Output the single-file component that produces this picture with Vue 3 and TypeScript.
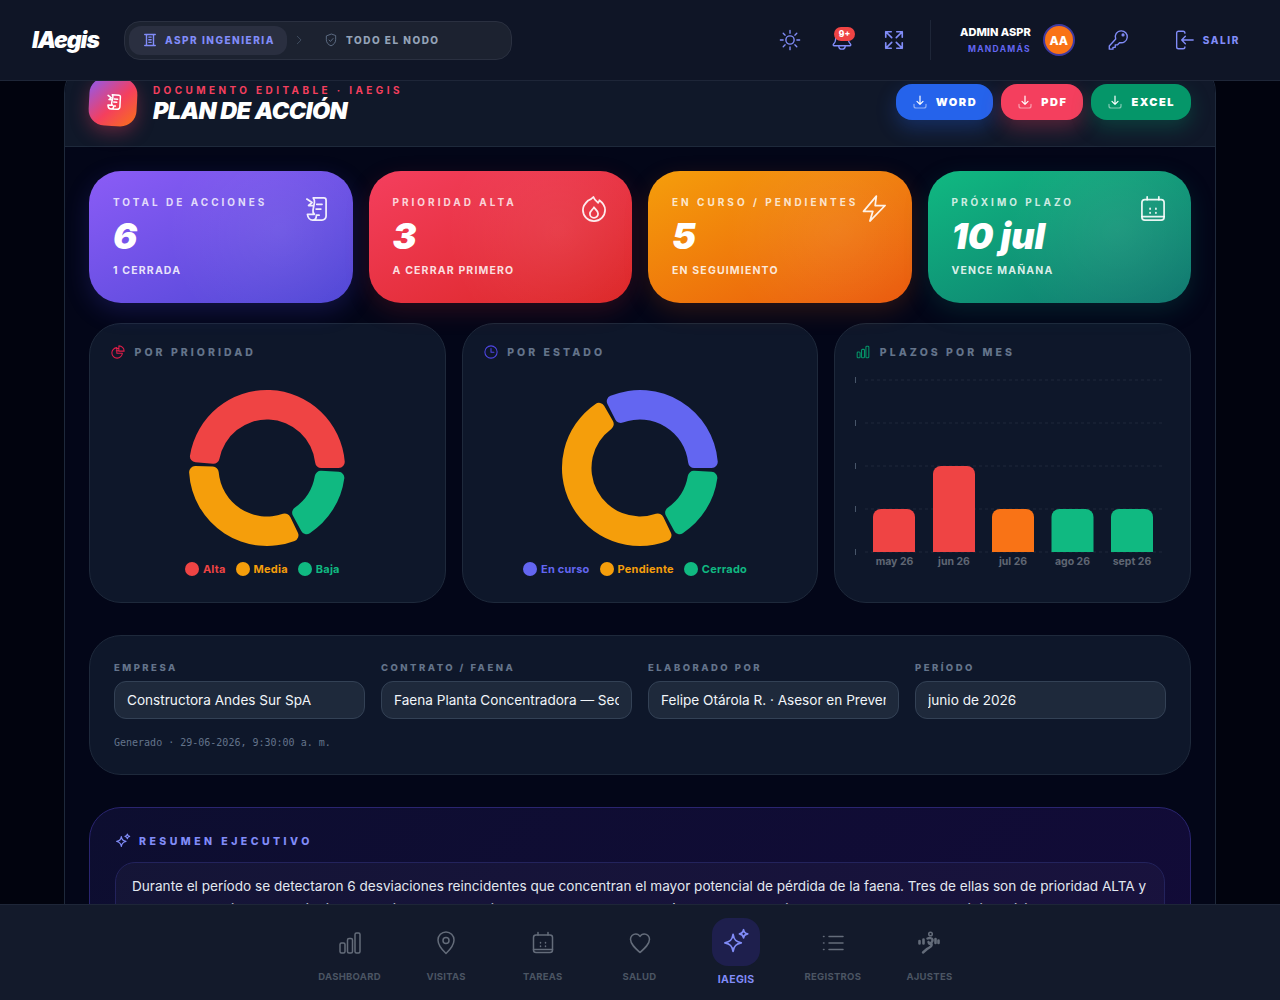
<script setup lang="ts">
type Seg = { value: number; color: string }

function pt(r: number, deg: number): string {
  const a = (deg * Math.PI) / 180
  return `${(100 + r * Math.cos(a)).toFixed(2)} ${(100 - r * Math.sin(a)).toFixed(2)}`
}

function sector(a1: number, a2: number, R = 78, r = 48.5, c = 6): string {
  const dO = (Math.asin(c / (R - c)) * 180) / Math.PI
  const dI = (Math.asin(c / (r + c)) * 180) / Math.PI
  const eO = Math.sqrt((R - c) ** 2 - c ** 2)
  const eI = Math.sqrt((r + c) ** 2 - c ** 2)
  const large = a2 - a1 - 2 * dO > 180 ? 1 : 0
  return [
    `M ${pt(eO, a1)}`,
    `A ${c} ${c} 0 0 0 ${pt(R, a1 + dO)}`,
    `A ${R} ${R} 0 ${large} 0 ${pt(R, a2 - dO)}`,
    `A ${c} ${c} 0 0 0 ${pt(eO, a2)}`,
    `L ${pt(eI, a2)}`,
    `A ${c} ${c} 0 0 0 ${pt(r, a2 - dI)}`,
    `A ${r} ${r} 0 ${large} 1 ${pt(r, a1 + dI)}`,
    `A ${c} ${c} 0 0 0 ${pt(eI, a1)}`,
    'Z',
  ].join(' ')
}

function donut(segs: Seg[]) {
  const total = segs.reduce((s, x) => s + x.value, 0)
  const per = (360 - 3 * segs.length) / total
  let a = 0
  return segs.map((s) => {
    const end = a + s.value * per
    const out = { d: sector(a, end), color: s.color }
    a = end + 3
    return out
  })
}

const prioridad = donut([
  { value: 3, color: '#ef4444' },
  { value: 2, color: '#f59e0b' },
  { value: 1, color: '#10b981' },
])
const estado = donut([
  { value: 2, color: '#6366f1' },
  { value: 3, color: '#f59e0b' },
  { value: 1, color: '#10b981' },
])

const legendA = [
  { t: 'Alta', c: '#ef4444' },
  { t: 'Media', c: '#f59e0b' },
  { t: 'Baja', c: '#10b981' },
]
const legendB = [
  { t: 'En curso', c: '#6366f1' },
  { t: 'Pendiente', c: '#f59e0b' },
  { t: 'Cerrado', c: '#10b981' },
]

const gridY = [6, 49, 92, 135, 178]
const bars = [
  { x: 18, y: 135, h: 43, c: '#ef4444', l: 'may 26', lx: 39.5 },
  { x: 78, y: 92, h: 86, c: '#ef4444', l: 'jun 26', lx: 99 },
  { x: 137, y: 135, h: 43, c: '#f97316', l: 'jul 26', lx: 158 },
  { x: 196.5, y: 135, h: 43, c: '#10b981', l: 'ago 26', lx: 217.5 },
  { x: 256, y: 135, h: 43, c: '#10b981', l: 'sept 26', lx: 277 },
]

function barPath(x: number, y: number, h: number): string {
  const w = 42
  const r = 8
  return `M${x} ${y + h}V${y + r}a${r} ${r} 0 0 1 ${r} ${-r}H${x + w - r}a${r} ${r} 0 0 1 ${r} ${r}V${y + h}Z`
}

const fields = [
  { l: 'Empresa', v: 'Constructora Andes Sur SpA' },
  { l: 'Contrato / Faena', v: 'Faena Planta Concentradora — Sector Norte' },
  { l: 'Elaborado por', v: 'Felipe Otárola R. · Asesor en Prevención' },
  { l: 'Período', v: 'junio de 2026' },
]

const kpis = [
  { k: 'violet', l: 'Total de acciones', v: '6', s: '1 cerrada', i: 'scroll' },
  { k: 'red', l: 'Prioridad alta', v: '3', s: 'A cerrar primero', i: 'flame' },
  { k: 'amber', l: 'En curso / pendientes', v: '5', s: 'En seguimiento', i: 'bolt' },
  { k: 'green', l: 'Próximo plazo', v: '10 jul', s: 'Vence mañana', i: 'cal' },
]

const nav = [
  { l: 'Dashboard', i: 'bars' },
  { l: 'Visitas', i: 'pin' },
  { l: 'Tareas', i: 'cal' },
  { l: 'Salud', i: 'heart' },
  { l: 'IAegis', i: 'spark', active: true },
  { l: 'Registros', i: 'list' },
  { l: 'Ajustes', i: 'run' },
]

const downloads = [
  { l: 'Word', k: 'blue' },
  { l: 'PDF', k: 'rose' },
  { l: 'Excel', k: 'emerald' },
]
</script>

<template>
  <div class="page">
    <svg class="defs" width="0" height="0" aria-hidden="true">
      <defs>
        <symbol id="i-scroll" viewBox="0 0 24 24">
          <path d="M5 3.500 9.500 6.500 6.500 9H10M10.500 2.500h9a2 2 0 0 1 2 2V18a3.500 3.500 0 0 1-3.500 3.500h-8M10.500 2.500c1 1.300 1.300 2.600 1 4l-1.200 6.500c-.3 1.500.3 2.800 1.200 3.500H5.500c.3 2.800 2.200 5 4.500 5 1.900 0 3.200-1.800 3.200-4.200h2.300" />
          <path d="M13.500 8h4.500M13 12h4" />
        </symbol>
        <symbol id="i-flame" viewBox="0 0 24 24">
          <path d="M11.500 1.700c.8 2.500 2.500 3.800 4 5 .6-.7 1-1.300 1.100-2.200 2.700 2 4.900 5 4.900 8.300a9.500 9.500 0 0 1-19 0c0-3.800 2.500-6.300 4.500-8.100 1.900-.7 3.500-1.800 4.500-3z" />
          <path d="M12 10.500c.4 1.500 3.500 2.700 3.500 5.500a3.500 3.500 0 0 1-7 0c0-2.500 2.600-3.300 3.500-5.500z" />
        </symbol>
        <symbol id="i-bolt" viewBox="0 0 24 24">
          <path d="M14 1 3 14h8l-2.500 8.300L21.500 9H13z" />
        </symbol>
        <symbol id="i-cal" viewBox="0 0 24 24">
          <rect x="2.500" y="4" width="19" height="17.500" rx="2.500" />
          <path d="M7 1.500V4M17 1.500V4M2.500 18.500h19M9.500 11.500v.5M14.500 11.500v.5M9.500 15v.5M14.500 15v.5" />
        </symbol>
        <symbol id="i-bars" viewBox="0 0 24 24">
          <rect x="2" y="12" width="5" height="10" rx="1.500" />
          <rect x="9.500" y="7.500" width="5" height="14.500" rx="1.500" />
          <rect x="17" y="2" width="5" height="20" rx="1.500" />
        </symbol>
        <symbol id="i-pin" viewBox="0 0 24 24">
          <path d="M12 22.500s-8-7.500-8-13.500a8 8 0 0 1 16 0c0 6-8 13.500-8 13.500z" />
          <circle cx="12" cy="9.500" r="3" />
        </symbol>
        <symbol id="i-heart" viewBox="0 0 24 24">
          <path d="M12 21.500C7 17 2.500 13 2.500 8.300A5.300 5.300 0 0 1 7.800 3c1.800 0 3.300.8 4.200 2.500C12.900 3.800 14.400 3 16.200 3a5.300 5.300 0 0 1 5.300 5.300C21.500 13 17 17 12 21.500z" />
        </symbol>
        <symbol id="i-spark" viewBox="0 0 24 24">
          <path d="M9.500 5.500c.7 4.700 2.500 6.500 7 7.200-4.500.8-6.300 2.600-7 7.300-.7-4.700-2.500-6.500-7-7.300 4.500-.7 6.300-2.500 7-7.200z" />
          <path d="M18.500 1.500c.3 2.300 1.200 3.200 3.500 3.500-2.300.4-3.200 1.200-3.500 3.500-.4-2.300-1.200-3.100-3.500-3.500 2.300-.3 3.100-1.200 3.500-3.500z" />
        </symbol>
        <symbol id="i-list" viewBox="0 0 24 24">
          <path d="M8 5.500h14M8 12h14M8 18.500h14M2.500 5.500h.5M2.500 12h.5M2.500 18.500h.5" />
        </symbol>
        <symbol id="i-run" viewBox="0 0 24 24">
          <circle cx="13.500" cy="3" r="1.800" />
          <path stroke-width="2.400" d="M10.500 7.500c2-.8 4.500-.6 5 1 .4 1.500-1 3.300-2.700 4 1.200.5 2 1.200 1.700 2.200-.4 1.400-3 2-4.500 3.300L6 21.500" />
          <path stroke-width="2.400" d="M14.500 13c-1.400.3-2.700-.6-3-2" />
          <path stroke-width="2.600" d="M2.500 10v2.500M6.500 8.500v4M18.500 8v4M21.500 9.500v2.500" />
        </symbol>
        <symbol id="i-download" viewBox="0 0 24 24">
          <path d="M12 3v12.500M7.500 11l4.500 4.500 4.500-4.500" />
          <path class="soft" d="M3 15.500V18a3 3 0 0 0 3 3h12a3 3 0 0 0 3-3v-2.500" />
        </symbol>
      </defs>
    </svg>

    <header class="topbar">
      <div class="logo">IAegis</div>
      <div class="crumbs">
        <div class="crumb active">
          <svg class="ico14" viewBox="0 0 24 24"><path stroke-width="2.400" d="M3 2.500h18M3 21.500h18M6 2.500v19M18 2.500v19M10 7h4M10 11.500h4M10 16h4" /></svg>
          <span>ASPR Ingenieria</span>
        </div>
        <svg class="chev" viewBox="0 0 24 24"><path d="m8 3 9 9-9 9" /></svg>
        <div class="crumb">
          <svg class="ico14" viewBox="0 0 24 24"><path d="M12 2 4 5v6.500c0 5 3.400 8.700 8 10.500 4.600-1.800 8-5.500 8-10.500V5z" /><path d="m8.500 12 2.500 2.500 4.500-5" /></svg>
          <span>Todo el nodo</span>
        </div>
      </div>
      <div class="tools">
        <button class="tool">
          <svg class="ico22" viewBox="0 0 24 24"><circle cx="12" cy="12" r="4.500" /><path d="M12 1.500v3M12 19.500v3M1.500 12h3M19.500 12h3M4.600 4.600l2.100 2.100M17.300 17.300l2.100 2.100M4.600 19.400l2.100-2.100M17.300 6.700l2.100-2.100" /></svg>
        </button>
        <button class="tool bell">
          <svg class="ico22" viewBox="0 0 24 24"><path d="M5 11.500a7 7 0 0 1 14 0c0 2.500.8 3.700 2.300 5 .6.600.3 1.800-.8 1.800h-17c-1.100 0-1.400-1.200-.8-1.800 1.500-1.300 2.300-2.500 2.300-5z" /><path d="M8.500 18.500a3.500 3.500 0 0 0 7 0" /></svg>
          <span class="badge">9+</span>
        </button>
        <button class="tool">
          <svg class="ico22 thick" viewBox="0 0 24 24"><path d="M3 9V3h6M3 3l6.500 6.500M21 9V3h-6M21 3l-6.500 6.500M3 15v6h6M3 21l6.500-6.500M21 15v6h-6M21 21l-6.500-6.500" /></svg>
        </button>
      </div>
      <div class="divider"></div>
      <div class="user">
        <div class="name">Admin ASPR</div>
        <div class="role">Mandamás</div>
      </div>
      <div class="avatar">AA</div>
      <svg class="ico22 key" viewBox="0 0 24 24"><path d="M15.500 2a6.500 6.500 0 1 1-1.500 12.800L11.500 17.300H9V20H6.500v2h-4v-3.500l7-7.500a6.500 6.500 0 0 1 6-9z" /><circle cx="17.500" cy="6.500" r="1" /></svg>
      <button class="logout">
        <svg class="ico22" viewBox="0 0 24 24"><path d="M11 2.500H6a2 2 0 0 0-2 2v15a2 2 0 0 0 2 2h5a2 2 0 0 0 2-2M13 4.500a2 2 0 0 0-2-2M22 12H9.500M13.500 8l-4 4 4 4" /></svg>
        <span>Salir</span>
      </button>
    </header>

    <main class="main">
      <section class="panel">
        <div class="panel-head">
          <div class="tile">
            <svg class="tile-ico"><use href="#i-scroll" /></svg>
          </div>
          <div class="heading">
            <div class="eyebrow">Documento editable · IAegis</div>
            <h1>Plan de acción</h1>
          </div>
          <div class="actions">
            <button v-for="d in downloads" :key="d.l" class="dl" :class="d.k">
              <svg class="ico16"><use href="#i-download" /></svg>
              <span>{{ d.l }}</span>
            </button>
          </div>
        </div>

        <div class="panel-body">
          <div class="kpis">
            <article v-for="k in kpis" :key="k.l" class="kpi" :class="k.k">
              <div class="kpi-text">
                <div class="kpi-label">{{ k.l }}</div>
                <div class="kpi-value">{{ k.v }}</div>
                <div class="kpi-sub">{{ k.s }}</div>
              </div>
              <svg class="kpi-ico"><use :href="'#i-' + k.i" /></svg>
            </article>
          </div>

          <div class="charts">
            <article class="card chart">
              <div class="card-title">
                <svg class="ico14 t-rose" viewBox="0 0 24 24"><path d="M10 4.500a9 9 0 1 0 9.500 9.500H10z" /><path d="M13.500 1.500a9 9 0 0 1 9 9h-9zM13.500 6H9M13.500 10H9" /></svg>
                <span>Por prioridad</span>
              </div>
              <svg class="donut" viewBox="0 0 200 200">
                <path v-for="(s, i) in prioridad" :key="i" :d="s.d" :fill="s.color" />
              </svg>
              <ul class="legend">
                <li v-for="l in legendA" :key="l.t" :style="{ color: l.c }">
                  <i :style="{ background: l.c }"></i>{{ l.t }}
                </li>
              </ul>
            </article>

            <article class="card chart">
              <div class="card-title">
                <svg class="ico14 t-indigo" viewBox="0 0 24 24"><circle cx="12" cy="12" r="10.500" /><path d="M12 6v6.500h5" /></svg>
                <span>Por estado</span>
              </div>
              <svg class="donut" viewBox="0 0 200 200">
                <path v-for="(s, i) in estado" :key="i" :d="s.d" :fill="s.color" />
              </svg>
              <ul class="legend">
                <li v-for="l in legendB" :key="l.t" :style="{ color: l.c }">
                  <i :style="{ background: l.c }"></i>{{ l.t }}
                </li>
              </ul>
            </article>

            <article class="card chart">
              <div class="card-title">
                <svg class="ico14 t-emerald"><use href="#i-bars" /></svg>
                <span>Plazos por mes</span>
              </div>
              <svg class="bars" viewBox="0 0 315 200">
                <line v-for="y in gridY" :key="y" x1="10" x2="308" :y1="y" :y2="y" class="grid" />
                <line v-for="y in gridY" :key="'t' + y" x1="0.500" x2="0.500" :y1="y - 3" :y2="y + 3" class="tick" />
                <path v-for="b in bars" :key="b.l" :d="barPath(b.x, b.y, b.h)" :fill="b.c" />
                <text v-for="b in bars" :key="'l' + b.l" :x="b.lx" y="187" dy="0.35em" text-anchor="middle">{{ b.l }}</text>
              </svg>
            </article>
          </div>

          <article class="card info">
            <div class="fields">
              <label v-for="f in fields" :key="f.l" class="field">
                <span>{{ f.l }}</span>
                <input :value="f.v" type="text" />
              </label>
            </div>
            <div class="generated">Generado · 29-06-2026, 9:30:00 a. m.</div>
          </article>

          <article class="summary">
            <div class="summary-title">
              <svg class="ico16"><use href="#i-spark" /></svg>
              <span>Resumen ejecutivo</span>
            </div>
            <div class="summary-box">
              Durante el período se detectaron 6 desviaciones reincidentes que concentran el mayor potencial de pérdida de la faena. Tres de ellas son de prioridad ALTA y
              vuelven a repetirse en el tránsito de camiones, los trabajos en altura y el uso de EPP), por lo que conviene cerrarlas antes de la próxima visita. El plan propone
              acciones concretas, responsables definidos y plazos verificables para cada hallazgo.
            </div>
          </article>
        </div>
      </section>
    </main>

    <nav class="bottom">
      <a v-for="n in nav" :key="n.l" class="nav-item" :class="{ on: n.active }">
        <span class="nav-tile"><svg class="nav-ico"><use :href="'#i-' + n.i" /></svg></span>
        <span class="nav-label">{{ n.l }}</span>
      </a>
    </nav>
  </div>
</template>

<style>
html,
body {
  margin: 0;
  height: 1000px;
  overflow: hidden;
  background: #01030e;
}
</style>

<style scoped>
* {
  box-sizing: border-box;
}
.page {
  height: 1000px;
  overflow: hidden;
  font-family: Inter, "Liberation Sans", sans-serif;
  color: #f8fafc;
  background: #01030e;
}
.defs {
  position: absolute;
}
svg {
  fill: none;
  stroke: currentColor;
  stroke-width: 1.8;
  stroke-linecap: round;
  stroke-linejoin: round;
  flex: none;
}
button {
  border: 0;
  background: none;
  color: inherit;
  font: inherit;
  padding: 0;
}
.ico14 {
  width: 14px;
  height: 14px;
}
.ico16 {
  width: 16px;
  height: 16px;
}
.ico22 {
  width: 22px;
  height: 22px;
  stroke-width: 1.5;
}
.thick {
  stroke-width: 1.8;
}

/* top bar */
.topbar {
  position: fixed;
  inset: 0 0 auto 0;
  z-index: 20;
  height: 81px;
  display: flex;
  align-items: center;
  padding: 0 40px 0 32px;
  background: #0f1526;
  border-bottom: 1px solid #1e2638;
  color: #818cf8;
}
.logo {
  width: 92px;
  font-size: 23px;
  font-weight: 900;
  font-style: italic;
  letter-spacing: -0.045em;
  color: #fff;
}
.crumbs {
  width: 388px;
  height: 39px;
  display: flex;
  align-items: center;
  padding: 0 4px;
  border-radius: 16px;
  background: #1c2230;
  border: 1px solid #2a3040;
}
.crumb {
  height: 29px;
  display: flex;
  align-items: center;
  gap: 8px;
  padding: 0 12px 0 14px;
  border-radius: 12px;
  font-size: 10px;
  font-weight: 800;
  letter-spacing: 0.15em;
  text-transform: uppercase;
  white-space: nowrap;
  color: #94a3b8;
}
.crumb .ico14 {
  color: #64748b;
  stroke-width: 1.5;
}
.crumb.active {
  width: 158px;
  background: #2a2f40;
  color: #818cf8;
}
.crumb.active .ico14 {
  color: #818cf8;
}
.chev {
  width: 10px;
  height: 10px;
  margin: 0 6.5px;
  color: #475569;
  stroke-width: 2;
}
.tools {
  display: flex;
  margin-left: auto;
  gap: 30px;
}
.tool {
  width: 22px;
  height: 22px;
  position: relative;
  color: #818cf8;
}
.tool .ico22 {
  display: block;
}
.badge {
  position: absolute;
  top: -2px;
  left: 3px;
  width: 21px;
  height: 14px;
  border-radius: 7px;
  background: #ef4444;
  color: #fff;
  font-size: 8.5px;
  font-weight: 800;
  line-height: 14px;
  text-align: center;
}
.divider {
  width: 1px;
  height: 40px;
  margin: 0 29px 0 25px;
  background: #1e2638;
}
.user {
  text-align: right;
  margin-right: 12px;
}
.name {
  font-size: 11px;
  font-weight: 800;
  line-height: 14px;
  color: #fff;
  text-transform: uppercase;
}
.role {
  margin-top: 5px;
  font-size: 8.5px;
  font-weight: 700;
  line-height: 11px;
  letter-spacing: 0.15em;
  color: #6366f1;
  text-transform: uppercase;
}
.avatar {
  width: 32px;
  height: 32px;
  display: flex;
  align-items: center;
  justify-content: center;
  border-radius: 50%;
  background: #f97316;
  border: 2px solid #3f3aa0;
  font-size: 12px;
  font-weight: 800;
  color: #fff;
}
.key {
  margin-left: 32px;
}
.logout {
  display: flex;
  align-items: center;
  gap: 8px;
  margin-left: 44px;
  color: #818cf8;
  font-size: 10px;
  font-weight: 800;
  letter-spacing: 0.16em;
  text-transform: uppercase;
}

/* panel */
.main {
  padding: 57px 64px 0;
}
.panel {
  border: 1px solid #1e293b;
  border-radius: 36px;
  background: #030618;
  overflow: hidden;
}
.panel-head {
  height: 89px;
  display: flex;
  align-items: flex-start;
  padding: 20px 24px 0;
  background: #101829;
  border-bottom: 1px solid #1e293b;
}
.tile {
  width: 48px;
  height: 48px;
  display: flex;
  align-items: center;
  justify-content: center;
  border-radius: 16px;
  background: linear-gradient(135deg, #8b5cf6 0%, #f43f5e 55%, #f97316 100%);
  box-shadow: 0 6px 18px rgba(244, 63, 94, 0.35);
  transform: rotate(3deg);
  color: #fff;
}
.tile-ico {
  width: 18px;
  height: 18px;
  stroke-width: 2;
}
.heading {
  margin: 5px 0 0 16px;
}
.eyebrow {
  font-size: 10px;
  font-weight: 700;
  line-height: 14px;
  letter-spacing: 0.34em;
  color: #f43f5e;
  text-transform: uppercase;
}
h1 {
  margin: 0;
  font-size: 23.5px;
  font-weight: 900;
  font-style: italic;
  line-height: 28px;
  letter-spacing: -0.025em;
  color: #fff;
  text-transform: uppercase;
}
.actions {
  margin-left: auto;
  margin-top: 6px;
  display: flex;
  gap: 8px;
}
.dl {
  height: 36px;
  display: flex;
  align-items: center;
  gap: 8px;
  padding: 0 16px;
  border-radius: 16px;
  color: #fff;
  font-size: 11px;
  font-weight: 900;
  letter-spacing: 0.14em;
  text-transform: uppercase;
}
.soft {
  opacity: 0.5;
}
.blue {
  background: #2563eb;
  box-shadow: 0 8px 20px rgba(37, 99, 235, 0.3);
}
.rose {
  background: #f43f5e;
  box-shadow: 0 8px 20px rgba(244, 63, 94, 0.3);
}
.emerald {
  background: #059669;
  box-shadow: 0 8px 20px rgba(5, 150, 105, 0.3);
}
.panel-body {
  padding: 24px 24px 0;
  display: flex;
  flex-direction: column;
}

/* kpis */
.kpis {
  display: grid;
  grid-template-columns: repeat(4, 1fr);
  gap: 16px;
}
.kpi {
  height: 132px;
  position: relative;
  display: flex;
  justify-content: space-between;
  padding: 24px;
  border-radius: 32px;
}
.kpi::after {
  content: "";
  position: absolute;
  inset: 0;
  border-radius: inherit;
  background: radial-gradient(circle at 72% 45%, rgba(255, 255, 255, 0.07), transparent 55%);
  pointer-events: none;
}
.violet {
  background: linear-gradient(155deg, #8b5cf6, #4f46d5);
  box-shadow: 0 8px 24px rgba(79, 70, 229, 0.22);
}
.red {
  background: linear-gradient(155deg, #f43f5e, #dc2626);
  box-shadow: 0 8px 24px rgba(220, 38, 38, 0.18);
}
.amber {
  background: linear-gradient(155deg, #f59e0b, #ea580c);
  box-shadow: 0 8px 24px rgba(234, 88, 12, 0.18);
}
.green {
  background: linear-gradient(155deg, #10b981, #0f766e);
  box-shadow: 0 8px 24px rgba(15, 118, 110, 0.22);
}
.kpi-label {
  font-size: 10px;
  font-weight: 700;
  line-height: 14px;
  letter-spacing: 0.3em;
  color: rgba(255, 255, 255, 0.8);
  text-transform: uppercase;
  white-space: nowrap;
}
.kpi-value {
  margin-top: 7px;
  font-size: 36px;
  font-weight: 900;
  font-style: italic;
  line-height: 40px;
  color: #fff;
}
.kpi-sub {
  margin-top: 8px;
  font-size: 10.5px;
  font-weight: 700;
  line-height: 14px;
  letter-spacing: 0.11em;
  color: rgba(255, 255, 255, 0.85);
  text-transform: uppercase;
}
.kpi-ico {
  width: 28px;
  height: 28px;
  color: rgba(255, 255, 255, 0.9);
  stroke-width: 1.5;
  position: relative;
  z-index: 1;
}

/* cards */
.card {
  border: 1px solid #1e293b;
  border-radius: 32px;
  background: #0e172a;
}
.charts {
  margin-top: 20px;
  display: grid;
  grid-template-columns: repeat(3, minmax(0, 1fr));
  gap: 16px;
}
.chart {
  height: 280px;
  min-width: 0;
  padding: 20px 21px;
}
.card-title {
  height: 16px;
  display: flex;
  align-items: center;
  gap: 9.5px;
  font-size: 10.5px;
  font-weight: 800;
  letter-spacing: 0.29em;
  color: #64748b;
  text-transform: uppercase;
}
.t-rose {
  color: #e11d48;
}
.t-indigo {
  color: #4f46e5;
}
.t-emerald {
  color: #059669;
}
.donut {
  display: block;
  width: 200px;
  height: 200px;
  margin: 8px auto -12px;
  stroke: none;
}
.legend {
  list-style: none;
  margin: 6px 0 0;
  padding: 0;
  display: flex;
  justify-content: center;
  font-size: 11px;
  font-weight: 700;
  line-height: 14px;
  letter-spacing: 0.02em;
}
.legend li {
  display: flex;
  align-items: center;
  gap: 4px;
  margin-right: 10px;
}
.legend i {
  width: 14px;
  height: 14px;
  border-radius: 50%;
}
.bars {
  display: block;
  width: 315px;
  height: 200px;
  margin: 14px 0 0 -1px;
  stroke: none;
}
.bars text {
  font-size: 10.5px;
  font-weight: 700;
  fill: #5f6673;
  stroke: none;
}
.grid {
  stroke: #1e293b;
  stroke-width: 1;
  stroke-dasharray: 3 3;
  stroke-linecap: butt;
}
.tick {
  stroke: #475569;
  stroke-width: 1;
  stroke-linecap: butt;
}

/* info */
.info {
  margin-top: 32px;
  height: 140px;
  padding: 24px;
}
.fields {
  display: grid;
  grid-template-columns: repeat(4, 1fr);
  gap: 16px;
}
.field {
  display: flex;
  flex-direction: column;
  gap: 6px;
  min-width: 0;
}
.field span {
  font-size: 9.5px;
  font-weight: 800;
  line-height: 15px;
  letter-spacing: 0.26em;
  color: #64748b;
  text-transform: uppercase;
  white-space: nowrap;
}
.field input {
  width: 100%;
  height: 38px;
  padding: 0 12px 1px;
  border: 1px solid #334155;
  border-radius: 12px;
  background: #1e293b;
  color: #f1f5f9;
  font-family: inherit;
  font-size: 13.6px;
  outline: none;
}
.generated {
  margin-top: 17px;
  font-family: "DejaVu Sans Mono", "Liberation Mono", monospace;
  font-size: 10px;
  line-height: 14px;
  color: #64748b;
}

/* summary */
.summary {
  margin-top: 32px;
  padding: 24px 25px;
  border: 1px solid #2a2570;
  border-radius: 32px;
  background: linear-gradient(135deg, #0d0e30, #120b38);
}
.summary-title {
  height: 18px;
  display: flex;
  align-items: center;
  gap: 8px;
  font-size: 10.5px;
  font-weight: 800;
  letter-spacing: 0.33em;
  color: #818cf8;
  text-transform: uppercase;
}
.summary-box {
  margin-top: 12px;
  padding: 11.5px 16px;
  border: 1px solid #23235c;
  border-radius: 20px;
  background: rgba(255, 255, 255, 0.03);
  font-size: 13.6px;
  line-height: 23.12px;
  color: #e2e8f0;
}

/* bottom nav */
.bottom {
  position: fixed;
  inset: auto 0 0 0;
  z-index: 20;
  height: 96px;
  display: flex;
  justify-content: center;
  padding-right: 1px;
  background: #131a2b;
  border-top: 1px solid #1e2638;
}
.nav-item {
  width: 96.67px;
  height: 100%;
  display: flex;
  flex-direction: column;
  align-items: center;
  color: #4b5563;
  padding-top: 13px;
}
.nav-tile {
  width: 48px;
  height: 48px;
  display: flex;
  align-items: center;
  justify-content: center;
  border-radius: 16px;
  color: #646c7a;
}
.nav-ico {
  width: 24px;
  height: 24px;
  margin-top: 2px;
  stroke-width: 1.5;
}
.nav-label {
  margin-top: 4px;
  font-size: 9.5px;
  font-weight: 700;
  line-height: 14px;
  letter-spacing: 0.03em;
  text-transform: uppercase;
}
.nav-item.on {
  color: #818cf8;
}
.nav-item.on .nav-tile {
  background: #1e1f4d;
  color: #818cf8;
}
.nav-item.on .nav-ico {
  width: 28px;
  height: 28px;
  margin-top: 0;
}
.nav-item.on .nav-label {
  margin-top: 7px;
  font-size: 10.5px;
}
</style>
